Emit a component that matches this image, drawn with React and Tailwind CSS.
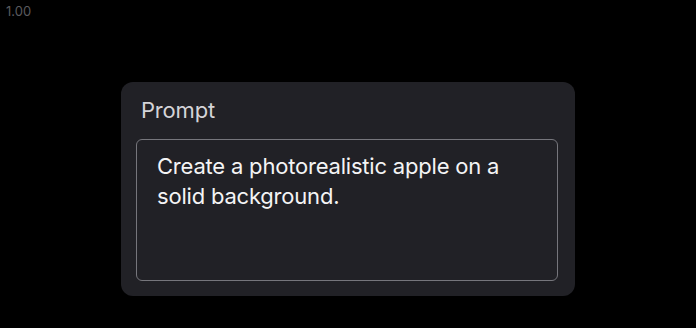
export default function App() {
  return (
    <div className="w-[696px] h-[328px] bg-black relative overflow-hidden" style={{ fontFamily: 'Inter, "Noto Sans", sans-serif' }}>
      <div className="absolute left-[6px] top-[2px] text-[13px] text-[#5a5a5e]">1.00</div>
      <div className="pt-[82px] pl-[121px]">
        <div className="w-[454px] h-[214px] bg-[#212126] rounded-[12px] pt-[14px] px-[15px] flex flex-col">
          <div className="pl-[5px] text-[22px] leading-[28px] text-[#d4d4d8] tracking-[-0.2px]">Prompt</div>
          <div className="mt-[15px] w-[422px] h-[142px] rounded-[6px] border border-[#76767c] px-[20px] pt-[11px] text-[22px] leading-[30px] text-[#f4f4f5] tracking-[-0.2px]">
            Create a photorealistic apple on a<br />solid background.
          </div>
        </div>
      </div>
    </div>
  );
}
